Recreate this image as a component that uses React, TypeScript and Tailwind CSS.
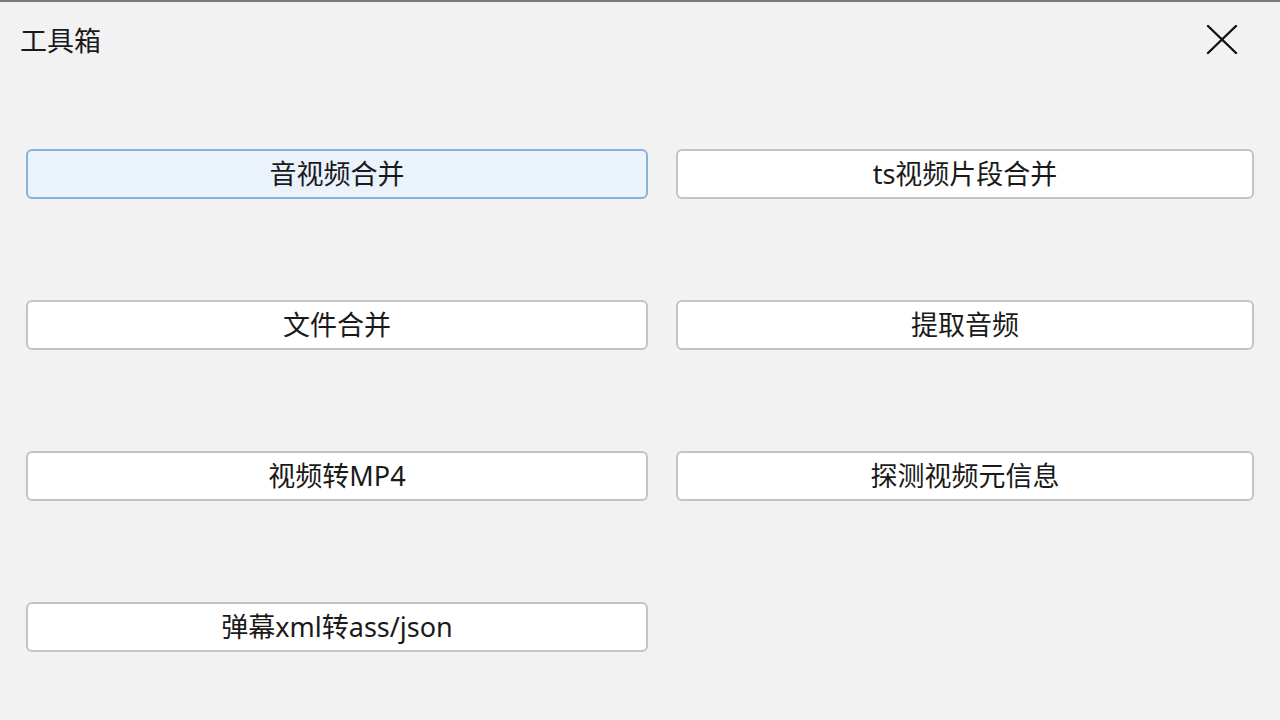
import { useState } from "react";

const tools = [
  "音视频合并",
  "ts视频片段合并",
  "文件合并",
  "提取音频",
  "视频转MP4",
  "探测视频元信息",
  "弹幕xml转ass/json",
];

export default function App() {
  const [active, setActive] = useState(0);

  return (
    <div
      className="w-[1280px] h-[720px] bg-[#f2f2f2] border-t-2 border-[#7a7a7a] text-[#1a1a1a] overflow-hidden"
      style={{ fontFamily: '"Noto Sans", "Noto Sans CJK SC", sans-serif' }}
    >
      <div className="flex items-center justify-between h-[78px] pl-[20px] pr-[42px] pb-[2px]">
        <span className="text-[27px] leading-none">工具箱</span>
        <button className="w-[32px] h-[32px] flex items-center justify-center">
          <svg width="32" height="30" viewBox="0 0 32 30" fill="none" stroke="#111" strokeWidth="2.4" strokeLinecap="round">
            <path d="M2 1 L30 28" />
            <path d="M30 1 L2 28" />
          </svg>
        </button>
      </div>

      <div className="grid grid-cols-[622px_578px] gap-x-[28px] gap-y-[101px] pl-[26px] pt-[69px]">
        {tools.map((name, i) => (
          <button
            key={name}
            onClick={() => setActive(i)}
            className={
              i === active
                ? "h-[50px] pb-[2px] rounded-[6px] border-2 border-[#88b2da] bg-[#eaf2fb] text-[27px] leading-none"
                : "h-[50px] pb-[2px] rounded-[6px] border-2 border-[#c4c4c4] bg-white text-[27px] leading-none"
            }
          >
            {name}
          </button>
        ))}
      </div>
    </div>
  );
}
